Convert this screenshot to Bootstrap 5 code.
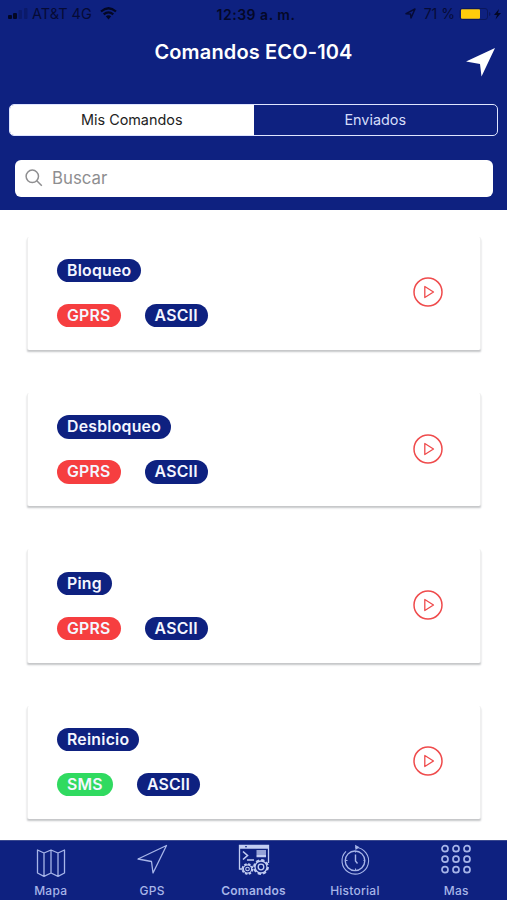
<!DOCTYPE html>
<html lang="es">
<head>
<meta charset="utf-8">
<meta name="viewport" content="width=device-width, initial-scale=1">
<title>Comandos ECO-104</title>
<link href="https://cdn.jsdelivr.net/npm/bootstrap@5.3.0/dist/css/bootstrap.min.css" rel="stylesheet">
<style>
:root { --navy: #0e2180; --danger: #f63e40; --ok: #30da60; }
html, body { height: 100%; overflow: hidden; }
body { font-family: Inter, "Liberation Sans", sans-serif; color: #222; background: #fff; }
svg { display: block; flex: none; }
.screen { height: 900px; }
.navy { background: var(--navy); }
.top-area { height: 210px; }
.status { height: 27px; padding: 0 5px 0 8px; font-size: 14px; line-height: 27px; color: #060b35; white-space: nowrap; }
.status > div { flex: 1 1 0; }
.carrier { font-size: 14.5px; }
.clock { font-weight: 600; font-size: 14px; letter-spacing: .5px; color: #040828; padding: 1px 0 0 2px; }
.title-bar { height: 76.5px; padding-top: 13px; }
.title-bar h1 { font-size: 20px; line-height: 24px; letter-spacing: .15px; margin: 0; font-weight: 600; }
.send { right: 11px; top: 20px; }
.segments { height: 32px; margin: 0 9px; border: 1.5px solid #dfe5ff; border-radius: 5px; font-size: 14.4px; overflow: hidden; }
.segments button { border: 0; padding: 1px 0 0; background: transparent; color: #d5ddfa; }
.segments .active { background: #fff; color: #222; }
.search { height: 37px; margin: 24px 14px 0 15px; border-radius: 6px; padding-left: 10px; gap: 9px; font-size: 16.8px; color: #8e8e90; }
.query { padding-top: 2px; }
.list { padding: 26.5px 26px 0 27px; gap: 43px; flex: 1 1 0; min-height: 0; overflow: hidden; }
.command { height: 113.4px; flex: none; border-radius: 2px; padding: 22.3px 37px 0 29px; box-shadow: 0 2px 2px -.5px #c4c6c8; background: #fff; clip-path: inset(0 -3px -6px -3px); border: solid #efefef; border-width: 0 1px; }
.tags { row-gap: 21.6px; }
.pill { display: inline-block; height: 23.4px; line-height: 23.4px; border-radius: 12px; padding: 0 10px; font-size: 15.8px; font-weight: 600; letter-spacing: .25px; color: #f4f6ff; white-space: nowrap; background: var(--navy); }
.pill.gprs { background: var(--danger); }
.pill.sms { background: var(--ok); }
.play { padding-top: 18.5px; }
.tabs { height: 60px; color: #a7b5e8; font-size: 12px; font-weight: 500; letter-spacing: .25px; border-top: 1px solid #39488f; }
.tabs a { flex: 1 1 0; padding-top: 2px; }
.tabs svg { height: 34px; width: 34px; }
.tabs span { line-height: 15px; margin-top: 6px; }
.tabs .current { color: #d3dcfb; font-weight: 600; }
</style>
</head>
<body>
<div class="screen d-flex flex-column">
  <header class="top-area navy">
    <div class="status d-flex align-items-center">
      <div class="d-flex align-items-center">
        <svg width="20" height="14" viewBox="0 0 20 14"><g fill="#030724"><rect y="8" width="4" height="4" rx="1"/><rect x="5" y="6" width="4" height="6" rx="1"/></g><g fill="#0b1a6a"><rect x="10.500" y="3" width="3.500" height="9" rx="1"/><rect x="16" y="1" width="3.500" height="11" rx="1"/></g></svg>
        <span class="ms-1 carrier">AT&amp;T 4G</span>
        <svg class="ms-2" width="17" height="13" viewBox="0 0 17 13" fill="none" stroke="#030724" stroke-width="2.200"><path d="M1 4.500Q8.500-2 16 4.500M3.700 7.400Q8.500 3.300 13.300 7.400"/><path d="M5.800 9.300Q8.500 7.100 11.200 9.300L8.500 12.500Z" fill="#030724" stroke="none"/></svg>
      </div>
      <span class="clock">12:39 a. m.</span>
      <div class="d-flex align-items-center justify-content-end">
        <svg width="11" height="11" viewBox="0 0 11 11" fill="none" stroke="#060b35" stroke-width="1.500" stroke-linejoin="round"><path d="M1 5.700 10 1 6 10 5.500 6Z"/></svg>
        <span class="ms-2">71 %</span>
        <svg class="ms-1" width="43" height="14" viewBox="0 0 43 14"><rect x="1" y="1.500" width="27.500" height="11" rx="2.500" fill="none" stroke="#0a175d"/><rect x="2" y="2.200" width="19" height="9.600" rx="1" fill="#ffcc0b"/><path d="M30 5v4q1.500-.5 1.500-2T30 5Z" fill="#0a175d"/><path d="M40 2 35 8h3L36.500 12.500 42 6h-3Z" fill="#030724"/></svg>
      </div>
    </div>
    <div class="title-bar position-relative text-center text-white">
      <h1>Comandos ECO-104</h1>
      <svg class="send position-absolute" width="31" height="30" viewBox="0 0 31 30"><path d="M1 14.500 30 1 16.500 29.500 15 17Z" fill="#fff"/></svg>
    </div>
    <div class="segments d-flex">
      <button class="active w-50" type="button">Mis Comandos</button>
      <button class="w-50" type="button">Enviados</button>
    </div>
    <div class="search bg-white d-flex align-items-center">
      <svg width="18" height="18" viewBox="0 0 18 18" fill="none" stroke="#8e8e90" stroke-width="1.500"><circle cx="7.300" cy="7.300" r="6.200"/><path d="m11.800 11.800 5 5"/></svg>
      <span class="query">Buscar</span>
    </div>
  </header>

  <main class="list d-flex flex-column">
    <article class="command d-flex justify-content-between">
      <div class="tags d-flex flex-column align-items-start"><span class="pill">Bloqueo</span><div class="d-flex gap-4"><span class="pill gprs">GPRS</span><span class="pill">ASCII</span></div></div>
      <div class="play"><svg width="30" height="30" viewBox="0 0 30 30"><use href="#play"/></svg></div>
    </article>
    <article class="command d-flex justify-content-between">
      <div class="tags d-flex flex-column align-items-start"><span class="pill">Desbloqueo</span><div class="d-flex gap-4"><span class="pill gprs">GPRS</span><span class="pill">ASCII</span></div></div>
      <div class="play"><svg width="30" height="30" viewBox="0 0 30 30"><use href="#play"/></svg></div>
    </article>
    <article class="command d-flex justify-content-between">
      <div class="tags d-flex flex-column align-items-start"><span class="pill">Ping</span><div class="d-flex gap-4"><span class="pill gprs">GPRS</span><span class="pill">ASCII</span></div></div>
      <div class="play"><svg width="30" height="30" viewBox="0 0 30 30"><use href="#play"/></svg></div>
    </article>
    <article class="command d-flex justify-content-between">
      <div class="tags d-flex flex-column align-items-start"><span class="pill">Reinicio</span><div class="d-flex gap-4"><span class="pill sms">SMS</span><span class="pill">ASCII</span></div></div>
      <div class="play"><svg width="30" height="30" viewBox="0 0 30 30"><use href="#play"/></svg></div>
    </article>
  </main>

  <nav class="tabs navy d-flex">
    <a class="d-flex flex-column align-items-center text-reset text-decoration-none" href="#">
      <svg viewBox="0 0 34 34" fill="none" stroke="currentColor" stroke-width="1.300" stroke-linejoin="round"><path d="M3.500 7 10 10 17 7 24 10 30.500 7V30L24 33.300 17 30 10 33.300 3.500 30ZM10 10V33M17 7V30M24 10V33"/></svg>
      <span>Mapa</span>
    </a>
    <a class="d-flex flex-column align-items-center text-reset text-decoration-none" href="#">
      <svg viewBox="0 0 34 34" fill="none" stroke="currentColor" stroke-width="1.300" stroke-linejoin="round"><path d="M3 16 31.500 2.500 18 30 16.500 18.500Z"/></svg>
      <span>GPS</span>
    </a>
    <a class="current d-flex flex-column align-items-center text-reset text-decoration-none" href="#">
      <svg viewBox="0 0 34 34" fill="none" stroke="#c2cdf2" stroke-width="1.300"><path d="M6 26H2.500V2.500H31.500V20M2.500 5H31.500"/><path d="M3 4H8M10 4H31" stroke-width="1.800"/><path d="m6 8.500 4.500 4L6 16.500M10 17H17" stroke-width="1.600"/><path d="M19.500 8H29M19.500 10H29M19.500 12H29M19.500 13.500H29" stroke-width="1.400"/><circle cx="10.500" cy="26" r="5" stroke-width="1.800" stroke-dasharray="2.400 1.527"/><circle cx="10.500" cy="26" r="4.100" stroke-width="1.100"/><circle cx="10.500" cy="26" r="1.800" stroke-width="1.100"/><circle cx="24" cy="24" r="7" stroke-width="1.800" stroke-dasharray="3.300 2.198"/><circle cx="24" cy="24" r="6"/><circle cx="24" cy="24" r="2.800"/></svg>
      <span>Comandos</span>
    </a>
    <a class="d-flex flex-column align-items-center text-reset text-decoration-none" href="#">
      <svg viewBox="0 0 34 34" fill="none" stroke="currentColor" stroke-width="1.100"><path d="M17.500 4.500A13.300 13.300 0 1 1 8 8.300"/><circle cx="17" cy="17.800" r="9.800" stroke-width="1.400"/><path d="M17.500 11.500V18L19.500 20.500" stroke-width="1.400"/><path d="M17.500 8V9.500M17.500 25.500V27M8 17.500H9.500M25.500 17.500H27"/><path d="M17 1.800 21.500 4.300 17.500 7Z" fill="currentColor" stroke="none"/></svg>
      <span>Historial</span>
    </a>
    <a class="d-flex flex-column align-items-center text-reset text-decoration-none" href="#">
      <svg viewBox="0 0 34 34" fill="none" stroke="currentColor" stroke-width="1.700"><circle cx="6" cy="5.700" r="3"/><circle cx="17" cy="5.700" r="3"/><circle cx="28" cy="5.700" r="3"/><circle cx="6" cy="16.200" r="3"/><circle cx="17" cy="16.200" r="3"/><circle cx="28" cy="16.200" r="3"/><circle cx="6" cy="26.700" r="3"/><circle cx="17" cy="26.700" r="3"/><circle cx="28" cy="26.700" r="3"/></svg>
      <span>Mas</span>
    </a>
  </nav>
</div>
<svg class="d-none" aria-hidden="true"><defs><g id="play" fill="none" stroke="#ef4b4c"><circle cx="15" cy="15" r="14" stroke-width="1.500"/><path d="M11.800 9.500V20.500L20.500 15Z" stroke-width="1.300" stroke-linejoin="round"/></g></defs></svg>
<script src="https://cdn.jsdelivr.net/npm/bootstrap@5.3.0/dist/js/bootstrap.bundle.min.js"></script>
</body>
</html>
